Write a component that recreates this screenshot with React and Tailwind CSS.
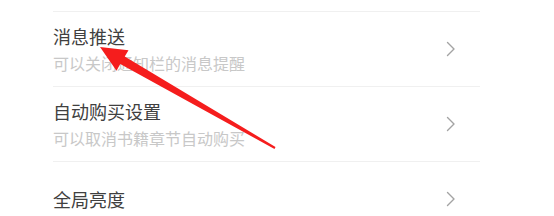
import React from 'react';

const rows = [
  { title: '消息推送', sub: '可以关闭通知栏的消息提醒' },
  { title: '自动购买设置', sub: '可以取消书籍章节自动购买' },
  { title: '全局亮度' },
];

const Chevron = () => (
  <svg width="10" height="16" viewBox="0 0 10 16" fill="none" className="mr-[24px]">
    <path d="M1.5 1.5 L8 8 L1.5 14.5" stroke="#a3a3a3" strokeWidth="1.4" strokeLinecap="round" strokeLinejoin="round" />
  </svg>
);

const App = () => {
  return (
    <div
      className="relative w-[554px] h-[216px] bg-white overflow-hidden"
      style={{ fontFamily: '"Noto Sans CJK SC", "Noto Sans", sans-serif' }}
    >
      <div className="ml-[53px] w-[427px] pt-[11px]">
        {rows.map((r) => (
          <div key={r.title} className="flex items-center justify-between h-[75px] border-t border-[#f0f0f0]">
            <div className="flex flex-col">
              <span className="text-[18px] leading-[22px] text-[#404040]">{r.title}</span>
              {r.sub && (
                <span className="mt-[6px] text-[16px] leading-[20px] text-[#c8c8c8]">{r.sub}</span>
              )}
            </div>
            <Chevron />
          </div>
        ))}
      </div>

      {/* red annotation arrow */}
      <svg className="absolute left-0 top-0 pointer-events-none" width="554" height="216">
        <polygon
          points="100,47 128.5,50.3 124.75,56.5 275.5,147.1 274.5,148.9 120.25,64 116.5,70.7"
          fill="#f51d1d"
        />
      </svg>
    </div>
  );
};

export default App;
